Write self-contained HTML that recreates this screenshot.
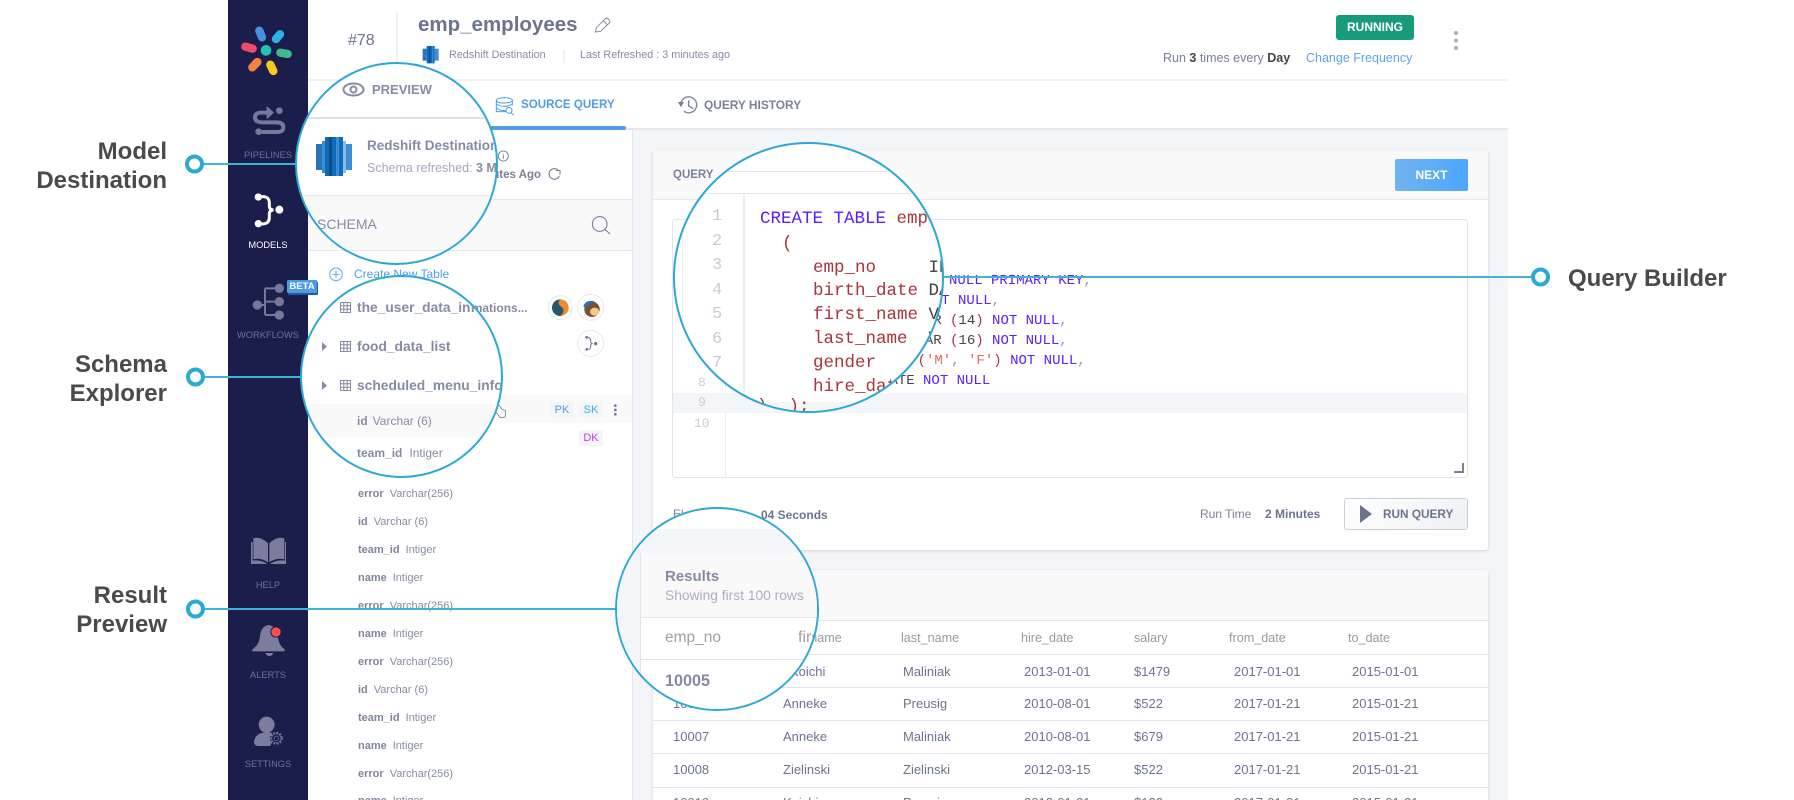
<!DOCTYPE html>
<html><head><meta charset="utf-8"><style>
html,body{margin:0;padding:0;background:#fff}
#p{position:relative;width:1794px;height:800px;overflow:hidden;background:#fff;font-family:"Liberation Sans",sans-serif;color:#6b7390}
.a{position:absolute}
.t{position:absolute;white-space:nowrap;line-height:20px;height:20px}
.b{font-weight:bold}
svg{position:absolute;overflow:visible}
.lens{position:absolute;box-sizing:border-box;border:2px solid #2aa8d6;border-radius:50%;overflow:hidden;background:#fff}
.in{position:absolute;width:1794px;height:800px}
.side{font-size:9.3px;color:#6f7390;width:80px;left:228px;text-align:center}
.f{font-size:11px;color:#858ba4}
.f b{margin-right:6px;color:#7f859e}
.m{font-family:"Liberation Mono",monospace;font-size:14px;color:#444;white-space:pre}
.k{color:#5a1eff}.r{color:#a8343c}.g{color:#999}.q{color:#e26a6a}
.l{font-family:"Liberation Mono",monospace;font-size:17.5px;color:#a8343c;white-space:pre}
.n{font-family:"Liberation Mono",monospace;font-size:17px;color:#c9cbd8}
.c{font-size:13px;color:#6b7390}
.h{font-size:12.6px;color:#999}
.chip{position:absolute;width:24px;height:16px;background:#f4f5f8;border-radius:2px;text-align:center;font-size:11px;line-height:16px}
.hl{position:absolute;height:1px;background:#e3e5ec}
.lbl{font-size:24px;font-weight:bold;color:#4a4a4a;line-height:28px;height:28px;text-align:right;left:0;width:167px}
</style></head><body><div id="p">

<!-- gray content bg -->
<div class="a" style="left:633px;top:128px;width:875px;height:672px;background:#f4f5f8"></div>

<!-- header -->
<div class="a" style="left:308px;top:79px;width:1200px;height:2px;background:#f1f2f6"></div>
<div class="a" style="left:308px;top:128px;width:1200px;height:2px;background:#e6e7ec"></div>
<div class="a" style="left:396px;top:11px;width:2px;height:52px;background:#f1f2f6"></div>
<div class="t" style="left:348px;top:31px;font-size:16px">#78</div>
<div class="t b" style="left:418px;top:15px;font-size:20.5px">emp_employees</div>
<div class="t" style="left:449px;top:45px;font-size:10.8px;color:#858ba4">Redshift Destination</div>
<div class="a" style="left:563px;top:50px;width:2px;height:13px;background:#f1f2f6"></div>
<div class="t" style="left:580px;top:45px;font-size:10.8px;color:#858ba4">Last Refreshed : 3 minutes ago</div>

<div class="a" style="left:1336px;top:15px;width:78px;height:25px;background:#179b7b;border-radius:3px;color:#fff;font-weight:bold;font-size:12px;line-height:25px;text-align:center">RUNNING</div>
<div class="t" style="left:1163px;top:48px;font-size:12.5px;color:#7a8099">Run <b style="color:#444">3</b> times every <b style="color:#444">Day</b></div>
<div class="t" style="left:1306px;top:48px;font-size:12.5px;color:#5ea5e8">Change Frequency</div>

<!-- tabs -->
<div class="t b" style="left:521px;top:95px;font-size:11.6px;color:#4d9de8">SOURCE QUERY</div>
<div class="t b" style="left:704px;top:95px;font-size:11.9px;color:#7a8099">QUERY HISTORY</div>
<div class="a" style="left:490px;top:126px;width:136px;height:4px;background:#4d9de8;border-radius:2px"></div>

<!-- left panel -->
<div class="a" style="left:308px;top:130px;width:324px;height:670px;background:#fff"></div>
<div class="a" style="left:632px;top:130px;width:1px;height:670px;background:#e3e5ec"></div>
<div class="a" style="left:308px;top:199px;width:324px;height:52px;background:#f9f9fa;border-top:1px solid #e6e7ec;border-bottom:1px solid #e6e7ec;box-sizing:border-box"></div>
<div class="t b" style="left:461px;top:165px;width:80px;text-align:right;font-size:11.5px;color:#7a8099">Minutes Ago</div>

<div class="t" style="left:354px;top:264px;font-size:12px;color:#4d9de8">Create New Table</div>
<div class="t b" style="left:357px;top:298px;font-size:12px;color:#858ba4">the_user_data_informations...</div>
<div class="a" style="left:500px;top:395px;width:132px;height:28px;background:#f9f9fa"></div>
<div class="chip" style="left:550px;top:402px;color:#4d9de8">PK</div>
<div class="chip" style="left:579px;top:402px;color:#3ab0e0">SK</div>
<div class="chip" style="left:579px;top:430px;color:#c13fe8">DK</div>

<div class="t f" style="left:358px;top:484px"><b>error</b>Varchar(256)</div>
<div class="t f" style="left:358px;top:512px"><b>id</b>Varchar (6)</div>
<div class="t f" style="left:358px;top:540px"><b>team_id</b>Intiger</div>
<div class="t f" style="left:358px;top:568px"><b>name</b>Intiger</div>
<div class="t f" style="left:358px;top:596px"><b>error</b>Varchar(256)</div>
<div class="t f" style="left:358px;top:624px"><b>name</b>Intiger</div>
<div class="t f" style="left:358px;top:652px"><b>error</b>Varchar(256)</div>
<div class="t f" style="left:358px;top:680px"><b>id</b>Varchar (6)</div>
<div class="t f" style="left:358px;top:708px"><b>team_id</b>Intiger</div>
<div class="t f" style="left:358px;top:736px"><b>name</b>Intiger</div>
<div class="t f" style="left:358px;top:764px"><b>error</b>Varchar(256)</div>
<div class="t f" style="left:358px;top:791px"><b>name</b>Intiger</div>

<!-- query card -->
<div class="a" style="left:653px;top:150px;width:835px;height:400px;background:#fff;border-radius:3px;box-shadow:0 1px 3px rgba(0,0,0,.14)"></div>
<div class="a" style="left:653px;top:150px;width:835px;height:50px;background:#f9f9fa;border-bottom:1px solid #e6e7ec;box-sizing:border-box;border-radius:3px 3px 0 0"></div>
<div class="t b" style="left:673px;top:165px;font-size:11.5px;color:#7a8099">QUERY</div>
<div class="a" style="left:1395px;top:159px;width:73px;height:32px;border-radius:2px;background:linear-gradient(90deg,#6fb4ee,#4da6ff);color:#fff;font-weight:bold;font-size:12px;line-height:32px;text-align:center">NEXT</div>

<div class="a" style="left:672px;top:219px;width:796px;height:259px;box-sizing:border-box;border:1px solid #e3e5ec;border-radius:3px;background:#fff"></div>
<div class="a" style="left:725px;top:220px;width:1px;height:257px;background:#eceef2"></div>
<div class="a" style="left:673px;top:393px;width:794px;height:20px;background:#f4f5f8"></div>
<div class="t" style="left:698px;top:373px;font-family:'Liberation Mono',monospace;font-size:13px;color:#c9cbd8">8</div>
<div class="t" style="left:698px;top:393px;font-family:'Liberation Mono',monospace;font-size:13px;color:#c9cbd8">9</div>
<div class="t" style="left:694px;top:414px;font-family:'Liberation Mono',monospace;font-size:13px;color:#c9cbd8">10</div>

<div class="t m" style="left:949px;top:271px"><span class="k">NULL PRIMARY KEY</span><span class="g">,</span></div>
<div class="t m" style="left:882.4px;top:291px">DATE <span class="k">NOT NULL</span><span class="g">,</span></div>
<div class="t m" style="left:882.8px;top:311px">VARCHAR <span class="r">(</span>14<span class="r">)</span> <span class="k">NOT NULL</span><span class="g">,</span></div>
<div class="t m" style="left:882.8px;top:331px">VARCHAR <span class="r">(</span>16<span class="r">)</span> <span class="k">NOT NULL</span><span class="g">,</span></div>
<div class="t m" style="left:917.6px;top:351px"><span class="r">(</span><span class="q">'M'</span><span class="g">,</span> <span class="q">'F'</span><span class="r">)</span> <span class="k">NOT NULL</span><span class="g">,</span></div>
<div class="t m" style="left:881px;top:371px">DATE <span class="k">NOT NULL</span></div>

<div class="t" style="left:673px;top:504px;font-size:12px;color:#7a8099">Elapsed</div>
<div class="t b" style="left:761px;top:505px;font-size:12px;color:#6b7390">04 Seconds</div>
<div class="t" style="left:1200px;top:504px;font-size:12px;color:#7a8099">Run Time</div>
<div class="t b" style="left:1265px;top:504px;font-size:12px;color:#6b7390">2 Minutes</div>
<div class="a" style="left:1344px;top:498px;width:124px;height:32px;box-sizing:border-box;border:1px solid #c8cfdc;border-radius:3px;background:linear-gradient(135deg,#fff,#eef0f5)"></div>
<div class="t" style="left:1383px;top:504px;font-size:11.8px;font-weight:bold;color:#6b7390">RUN QUERY</div>

<!-- results card -->
<div class="a" style="left:653px;top:570px;width:835px;height:240px;background:#fff;border-radius:3px;box-shadow:0 1px 3px rgba(0,0,0,.14)"></div>
<div class="a" style="left:653px;top:570px;width:835px;height:51px;background:#f9f9fa;border-radius:3px 3px 0 0"></div>
<div class="hl" style="left:653px;top:620px;width:835px"></div>
<div class="hl" style="left:653px;top:654px;width:835px"></div>
<div class="hl" style="left:653px;top:687px;width:835px"></div>
<div class="hl" style="left:653px;top:720px;width:835px"></div>
<div class="hl" style="left:653px;top:753px;width:835px"></div>
<div class="hl" style="left:653px;top:787px;width:835px"></div>

<div class="t h" style="left:783px;top:628px">first_name</div>
<div class="t h" style="left:901px;top:628px">last_name</div>
<div class="t h" style="left:1021px;top:628px">hire_date</div>
<div class="t h" style="left:1134px;top:628px">salary</div>
<div class="t h" style="left:1229px;top:628px">from_date</div>
<div class="t h" style="left:1348px;top:628px">to_date</div>

<div class="t c" style="left:790px;top:662px">Koichi</div><div class="t c" style="left:903px;top:662px">Maliniak</div><div class="t c" style="left:1024px;top:662px">2013-01-01</div><div class="t c" style="left:1134px;top:662px">$1479</div><div class="t c" style="left:1234px;top:662px">2017-01-01</div><div class="t c" style="left:1352px;top:662px">2015-01-01</div>
<div class="t c" style="left:673px;top:694px">10006</div><div class="t c" style="left:783px;top:694px">Anneke</div><div class="t c" style="left:903px;top:694px">Preusig</div><div class="t c" style="left:1024px;top:694px">2010-08-01</div><div class="t c" style="left:1134px;top:694px">$522</div><div class="t c" style="left:1234px;top:694px">2017-01-21</div><div class="t c" style="left:1352px;top:694px">2015-01-21</div>
<div class="t c" style="left:673px;top:727px">10007</div><div class="t c" style="left:783px;top:727px">Anneke</div><div class="t c" style="left:903px;top:727px">Maliniak</div><div class="t c" style="left:1024px;top:727px">2010-08-01</div><div class="t c" style="left:1134px;top:727px">$679</div><div class="t c" style="left:1234px;top:727px">2017-01-21</div><div class="t c" style="left:1352px;top:727px">2015-01-21</div>
<div class="t c" style="left:673px;top:760px">10008</div><div class="t c" style="left:783px;top:760px">Zielinski</div><div class="t c" style="left:903px;top:760px">Zielinski</div><div class="t c" style="left:1024px;top:760px">2012-03-15</div><div class="t c" style="left:1134px;top:760px">$522</div><div class="t c" style="left:1234px;top:760px">2017-01-21</div><div class="t c" style="left:1352px;top:760px">2015-01-21</div>
<div class="t c" style="left:673px;top:793px">10010</div><div class="t c" style="left:783px;top:793px">Koichi</div><div class="t c" style="left:903px;top:793px">Preusig</div><div class="t c" style="left:1024px;top:793px">2012-01-21</div><div class="t c" style="left:1134px;top:793px">$122</div><div class="t c" style="left:1234px;top:793px">2017-01-21</div><div class="t c" style="left:1352px;top:793px">2015-01-21</div>

<!-- base icons: header & right -->
<svg style="left:400px;top:0" width="400" height="130" viewBox="0 0 1200 390">
  <path d="M586 96L590 82L616 56Q620 52 625 57L628 60Q632 65 628 69L602 94ZM610 62L622 75" fill="none" stroke="#858ba4" stroke-width="3"/>
  <g><rect x="68" y="146" width="12" height="36" fill="#2a74b8"/><rect x="80" y="138" width="24" height="52" fill="#0f6cb8"/><rect x="87" y="138" width="4" height="52" fill="#0a4f8a"/><rect x="96" y="138" width="3" height="52" fill="#3d8ed0"/><rect x="104" y="146" width="12" height="36" fill="#3d8ed0"/></g>
  <g fill="none" stroke="#4d9de8" stroke-width="3"><ellipse cx="313" cy="301" rx="24" ry="8"/><path d="M289 301V335H318M337 301V316M289 312Q313 326 337 312M289 324Q300 332 316 332"/><circle cx="327" cy="331" r="9"/><path d="M333 338L341 345"/></g>
  <g fill="none" stroke="#7a8099" stroke-width="4"><path d="M842 315A24 24 0 1 1 852 334"/><path d="M866 301V318L880 326"/></g><path d="M834 306H852L843 322Z" fill="#7a8099"/>
</svg>
<svg style="left:1450px;top:28px" width="12" height="24"><circle cx="6" cy="5" r="2" fill="#a8adc0"/><circle cx="6" cy="12.5" r="2" fill="#a8adc0"/><circle cx="6" cy="20" r="2" fill="#a8adc0"/></svg>
<svg style="left:1350px;top:460px" width="120" height="70">
  <path d="M10 45 L22 54 L10 63Z" fill="#6b7390"/>
  <path d="M104 12H113V3" fill="none" stroke="#7a8099" stroke-width="2"/>
</svg>

<!-- schema icons -->
<svg style="left:220px;top:0" width="420" height="810" viewBox="0 0 1260 2430">
  <g fill="none" stroke="#6b7390" stroke-width="3">
    <circle cx="850" cy="468" r="15" stroke-width="2.5"/>
    <path d="M1018 528A16 16 0 1 1 1014 510"/><path d="M1008 512H1020V524"/>
    <circle cx="1139" cy="672" r="22" stroke-width="3"/><path d="M1155 688L1170 702" stroke-width="3"/>
  </g>
  <path d="M850 461V463M850 466V476" stroke="#6b7390" stroke-width="3"/>
  <g fill="none" stroke="#5ea5e8" stroke-width="3"><circle cx="348" cy="823" r="19"/><path d="M348 812V834M337 823H359"/></g>
  <g>
    <circle cx="1021" cy="923" r="36" fill="#fff" stroke="#e2e4ea" stroke-width="2.5"/>
    <circle cx="1021" cy="923" r="25" fill="#f08a2e"/><path d="M1021 898A25 25 0 0 0 1021 948Q1040 930 1021 918Q1010 908 1021 898Z" fill="#23566f"/>
    <circle cx="1112" cy="922" r="39" fill="#fff" stroke="#e2e4ea" stroke-width="2.5"/>
    <circle cx="1116" cy="928" r="23" fill="#7a5230"/><ellipse cx="1124" cy="935" rx="14" ry="12" fill="#f3c98f"/>
    <path d="M1090 918Q1098 898 1124 904L1096 924Z" fill="#2f6fb3"/>
    <circle cx="1112" cy="1030" r="39" fill="#fff" stroke="#e2e4ea" stroke-width="2.5"/>
    <path d="M1096 1012Q1112 1010 1112 1022V1026Q1112 1030 1118 1030Q1112 1031 1112 1036V1040Q1112 1050 1098 1048" fill="none" stroke="#6b7390" stroke-width="3"/>
    <circle cx="1127" cy="1031" r="5" fill="#6b7390"/><circle cx="1100" cy="1012" r="4" fill="#6b7390"/><circle cx="1100" cy="1048" r="4" fill="#6b7390"/>
  </g>
  <g fill="#6b7390"><circle cx="1186" cy="1217" r="4"/><circle cx="1186" cy="1230" r="4"/><circle cx="1186" cy="1243" r="4"/></g>
  <path d="M834 1212L846 1228L856 1232V1246Q856 1252 850 1252H840L828 1236" fill="#fff" stroke="#777" stroke-width="2.5"/>
</svg>

<!-- sidebar -->
<div class="a" style="left:228px;top:0;width:80px;height:800px;background:#1b1d4a"></div>
<div class="t side" style="top:145px">PIPELINES</div>
<div class="t side" style="top:235px;color:#fff">MODELS</div>
<div class="t side" style="top:325px">WORKFLOWS</div>
<div class="t side" style="top:575px">HELP</div>
<div class="t side" style="top:665px">ALERTS</div>
<div class="t side" style="top:754px">SETTINGS</div>
<svg style="left:220px;top:0" width="420" height="270" viewBox="0 0 1260 810">
  <g stroke-width="25" stroke-linecap="round" fill="none">
    <path d="M118 92L126 112" stroke="#4a90e2"/>
    <path d="M180 103L168 117" stroke="#2bb3e6"/>
    <path d="M181 158L203 162" stroke="#3db88f"/>
    <path d="M151 194L160 213" stroke="#f8c91c"/>
    <path d="M112 186L97 202" stroke="#f5813f"/>
    <path d="M76 140L98 146" stroke="#ef4a6b"/>
  </g>
  <circle cx="138" cy="151" r="16" fill="#1fc4b4"/>
  <g fill="none" stroke="#75789a" stroke-width="12"><path d="M148 338H125Q105 338 105 352T125 367H170Q190 367 190 382T170 396H125"/></g>
  <path d="M140 318L162 338L140 358Z" fill="#75789a"/><circle cx="178" cy="332" r="10" fill="#75789a"/><circle cx="116" cy="395" r="10" fill="#75789a"/>
  <g fill="#fff"><circle cx="115" cy="591" r="11"/><circle cx="115" cy="671" r="11"/><circle cx="178" cy="629" r="12"/></g>
  <path d="M125 590Q148 588 148 610V620Q148 628 160 630Q148 632 148 640V652Q148 672 125 672" fill="none" stroke="#fff" stroke-width="9"/>
</svg>
<svg style="left:220px;top:260px" width="420" height="270" viewBox="0 0 1260 810">
  <g fill="none" stroke="#75789a" stroke-width="6"><path d="M112 135H135M135 85V165M135 85H178M135 125H178M135 165H178"/></g>
  <g fill="#75789a"><circle cx="112" cy="135" r="14"/><circle cx="178" cy="85" r="14"/><circle cx="178" cy="125" r="14"/><circle cx="178" cy="165" r="14"/></g>
</svg>
<div class="a" style="left:287px;top:280px;width:30px;height:13px;background:#4a9be8;border-radius:1px;box-shadow:1px 2px 0 #225b9a;color:#fff;font-weight:bold;font-size:9.5px;line-height:13px;text-align:center">BETA</div>
<svg style="left:220px;top:530px" width="420" height="270" viewBox="0 0 1260 810">
  <path d="M144 40Q122 18 100 25V88Q122 82 144 97Z M148 40Q170 18 193 25V88Q170 82 148 97Z M93 36H98V92Q122 88 142 102H93Z M198 36H195V92Q170 88 150 102H198Z" fill="#7a7d9b"/>
  <path d="M146 285Q122 290 120 318Q118 345 97 358V364H194V358Q175 345 174 318Q172 290 146 285Z" fill="#7a7d9b"/>
  <path d="M136 369H160Q156 378 148 378Q140 378 136 369Z" fill="#7a7d9b"/>
  <circle cx="168" cy="306" r="17" fill="#1b1d4a"/><circle cx="168" cy="306" r="14" fill="#ff4d4d"/>
  <circle cx="140" cy="584" r="24" fill="#7a7d9b"/>
  <path d="M102 635Q106 607 140 607Q160 607 170 615L150 648H115Q102 648 102 635Z" fill="#7a7d9b"/>
  <circle cx="169" cy="625" r="19" fill="#1b1d4a"/>
  <circle cx="169" cy="625" r="17" fill="none" stroke="#7a7d9b" stroke-width="5" stroke-dasharray="5 5"/>
  <circle cx="169" cy="625" r="14" fill="none" stroke="#7a7d9b" stroke-width="2"/>
  <circle cx="169" cy="625" r="7" fill="none" stroke="#7a7d9b" stroke-width="2"/>
</svg>

<!-- callout lines -->
<svg style="left:0;top:0" width="1794" height="800">
  <g stroke="#3fb3dc" stroke-width="2" fill="none">
    <path d="M203 164H296M203 377H301M203 609H616M940 277H1532"/>
  </g>
  <g fill="#fff" stroke="#2aa8d6" stroke-width="4">
    <circle cx="194.500" cy="164" r="7.500"/><circle cx="195.500" cy="377" r="7.500"/><circle cx="195.500" cy="609" r="7.500"/><circle cx="1540.500" cy="277" r="7.500"/>
  </g>
</svg>
<div class="t lbl" style="top:138px">Model</div>
<div class="t lbl" style="top:167px">Destination</div>
<div class="t lbl" style="top:351px">Schema</div>
<div class="t lbl" style="top:380px">Explorer</div>
<div class="t lbl" style="top:582px">Result</div>
<div class="t lbl" style="top:611px">Preview</div>
<div class="t lbl" style="top:265px;left:1568px;width:auto;text-align:left">Query Builder</div>

<!-- lens 1 -->
<div class="lens" style="left:295px;top:62px;width:203px;height:203px"><div class="in" style="left:-297px;top:-64px">
  <div class="a" style="left:295px;top:117px;width:210px;height:2px;background:#dfe1e8"></div>
  <div class="a" style="left:295px;top:195px;width:210px;height:56px;background:#f9f9fa;border-top:1px solid #e6e7ec;border-bottom:1px solid #e6e7ec;box-sizing:border-box"></div>
  <div class="t b" style="left:372px;top:80px;font-size:13px;color:#858ba4">PREVIEW</div>
  <svg style="left:343px;top:82px" width="22" height="16"><ellipse cx="10.500" cy="7.500" rx="10" ry="6" fill="none" stroke="#858ba4" stroke-width="2"/><circle cx="10.500" cy="7.500" r="3" fill="none" stroke="#858ba4" stroke-width="2"/></svg>
  <svg style="left:316px;top:137px" width="36" height="40" viewBox="0 0 36 40"><rect x="0" y="7" width="6" height="26" fill="#2a74b8"/><rect x="6" y="4" width="3" height="32" fill="#3d8ed0"/><rect x="9" y="0" width="18" height="39" fill="#0f6cb8"/><rect x="13" y="0" width="3" height="39" fill="#0a4f8a"/><rect x="20" y="0" width="3" height="39" fill="#3d8ed0"/><rect x="27" y="4" width="3" height="32" fill="#8bbce6"/><rect x="30" y="7" width="6" height="26" fill="#3d8ed0"/></svg>
  <div class="t b" style="left:367px;top:136px;font-size:13.500px;color:#858ba4">Redshift Destination</div>
  <div class="t" style="left:367px;top:158px;font-size:12.500px;color:#a4a8ba">Schema refreshed:</div>
  <div class="t b" style="left:476px;top:158px;font-size:12.500px;color:#858ba4">3 Minutes</div>
  <div class="t" style="left:317px;top:214px;font-size:14px;color:#858ba4">SCHEMA</div>
</div></div>

<!-- lens 2 -->
<div class="lens" style="left:300px;top:275px;width:203px;height:203px"><div class="in" style="left:-302px;top:-277px">
  <div class="a" style="left:300px;top:404px;width:210px;height:33px;background:#f9f9fa"></div>
  <svg style="left:340px;top:302px" width="12" height="92" fill="none" stroke="#858ba4" stroke-width="1">
    <g><rect x=".5" y=".5" width="10" height="10"/><path d="M.5 3.800H10.500M.5 7.200H10.500M3.800 .5V10.500M7.200 .5V10.500"/></g>
    <g transform="translate(0,39)"><rect x=".5" y=".5" width="10" height="10"/><path d="M.5 3.800H10.500M.5 7.200H10.500M3.800 .5V10.500M7.200 .5V10.500"/></g>
    <g transform="translate(0,78)"><rect x=".5" y=".5" width="10" height="10"/><path d="M.5 3.800H10.500M.5 7.200H10.500M3.800 .5V10.500M7.200 .5V10.500"/></g>
  </svg>
  <svg style="left:322px;top:342px" width="6" height="50" fill="#858ba4"><path d="M0 0L5 4.500L0 9Z"/><path d="M0 39L5 43.500L0 48Z"/></svg>
  <div class="t b" style="left:357px;top:298px;font-size:13.800px;color:#858ba4">the_user_data_informations...</div>
  <div class="t b" style="left:357px;top:337px;font-size:13.800px;color:#858ba4">food_data_list</div>
  <div class="t b" style="left:357px;top:376px;font-size:13.800px;color:#858ba4">scheduled_menu_info</div>
  <div class="t" style="left:357px;top:411px;font-size:12px;color:#858ba4"><b style="margin-right:5px">id</b>Varchar (6)</div>
  <div class="t" style="left:357px;top:443px;font-size:12px;color:#858ba4"><b style="margin-right:7px">team_id</b>Intiger</div>
</div></div>

<!-- lens 3 -->
<div class="lens" style="left:673px;top:142px;width:271px;height:271px"><div class="in" style="left:-675px;top:-144px">
  <div class="a" style="left:670px;top:171px;width:280px;height:1px;background:#e3e5ec"></div>
  <div class="a" style="left:670px;top:193px;width:280px;height:1px;background:#e3e5ec"></div>
  <div class="a" style="left:682px;top:220px;width:1px;height:200px;background:#eceef2"></div>
  <div class="a" style="left:743px;top:194px;width:2px;height:220px;background:#eceef2"></div>
  <div class="a" style="left:670px;top:402px;width:280px;height:14px;background:#f4f5f8"></div>
  <div class="t n" style="left:712px;top:207px">1</div>
  <div class="t n" style="left:712px;top:232px">2</div>
  <div class="t n" style="left:712px;top:256px">3</div>
  <div class="t n" style="left:712px;top:281px">4</div>
  <div class="t n" style="left:712px;top:305px">5</div>
  <div class="t n" style="left:712px;top:330px">6</div>
  <div class="t n" style="left:712px;top:354px">7</div>
  <div class="t l" style="left:760px;top:209px"><span class="k">CREATE TABLE</span> emp</div>
  <div class="t l" style="left:782px;top:234px">(</div>
  <div class="t l" style="left:813px;top:258px">emp_no     <span style="color:#444">INT</span></div>
  <div class="t l" style="left:813px;top:281px">birth_date <span style="color:#444">DATE</span></div>
  <div class="t l" style="left:813px;top:305px">first_name <span style="color:#444">VARCHAR</span></div>
  <div class="t l" style="left:813px;top:329px">last_name  <span style="color:#444">VARCHAR</span></div>
  <div class="t l" style="left:813px;top:353px">gender     <span style="color:#444">ENUM</span></div>
  <div class="t l" style="left:813px;top:377px">hire_date  <span style="color:#444">DATE</span></div>
  <div class="t l" style="left:757px;top:397px">), );</div>
</div></div>

<!-- lens 4 -->
<div class="lens" style="left:615px;top:507px;width:204px;height:204px"><div class="in" style="left:-617px;top:-509px">
  <div class="a" style="left:610px;top:500px;width:220px;height:215px;background:#fff"></div>
  <div class="a" style="left:610px;top:529px;width:220px;height:24px;background:#f4f5f8"></div>
  <div class="a" style="left:640px;top:553px;width:190px;height:64px;background:#f9f9fa;border-radius:3px 0 0 0"></div>
  <div class="a" style="left:610px;top:529px;width:30px;height:190px;background:#f4f5f8"></div>
  <div class="a" style="left:640px;top:617px;width:190px;height:1px;background:#e3e5ec"></div>
  <div class="a" style="left:640px;top:659px;width:190px;height:1px;background:#e3e5ec"></div>
  <div class="a" style="left:640px;top:553px;width:1px;height:170px;background:#e3e5ec"></div>
  <div class="t b" style="left:665px;top:567px;font-size:15px;color:#858ba4">Results</div>
  <div class="t" style="left:665px;top:586px;font-size:13.800px;color:#aaaebd">Showing first 100 rows</div>
  <div class="t" style="left:665px;top:628px;font-size:15.500px;color:#a0a0a0">emp_no</div>
  <div class="t" style="left:798px;top:628px;font-size:16px;color:#a0a0a0">first_name</div>
  <div class="t b" style="left:665px;top:671px;font-size:16.200px;color:#858ba4">10005</div>
</div></div>

</div></body></html>
